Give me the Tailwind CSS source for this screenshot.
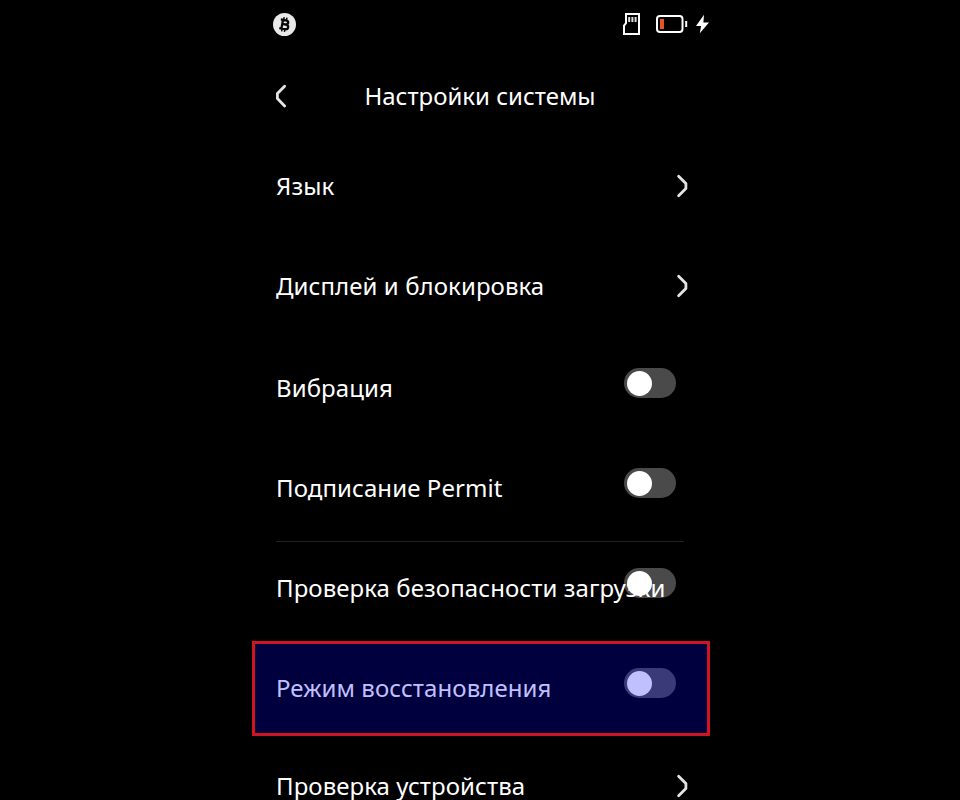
<!DOCTYPE html>
<html lang="ru">
<head>
<meta charset="utf-8">
<title>Настройки системы</title>
<script src="https://cdn.jsdelivr.net/npm/@tailwindcss/browser@4"></script>
</head>
<body class="bg-black text-white font-['Noto_Sans',sans-serif] text-[24px] leading-[34px] tracking-[0.08px]">
<div class="w-[960px] h-[800px] overflow-hidden">
<main class="mx-auto w-[480px]">
  <div class="h-[48px] pl-[33px] pr-[10px] flex items-center">
    <svg class="size-[23px]" viewBox="0 0 23 23"><circle cx="11.5" cy="11.5" r="11.5" fill="#e9e9e9"/><g transform="rotate(10 11.5 11.5)" fill="none" stroke="#080808"><path stroke-width="2.3" d="M7 7.1h5.200c3.500 0 3.500 4.200 0 4.200H9.200M9.200 11.300h3.600c3.700 0 3.700 4.700 0 4.700H7M9.200 7.100V16"/><path stroke-width="1.5" d="M9.900 4.300v2.800M12.700 4.300v2.800M9.900 16v2.800M12.700 16v2.800"/></g></svg>
    <svg class="ml-auto w-[19px] h-[24px]" viewBox="0 0 19 24" fill="none"><path d="M5 2h13v20H3v-8.500l2-2.300z" stroke="#fff" stroke-width="2" transform="translate(-1 0)"/><path d="M7.200 5v5M10.400 5v5M13.600 5v5" stroke="#ddd" stroke-width="2"/></svg>
    <svg class="ml-[14px] w-[33px] h-[20px]" viewBox="0 0 33 20" fill="none"><rect x="2" y="2" width="25.500" height="16" rx="3" stroke="#fff" stroke-width="2"/><path d="M5 5h4v10H5z" fill="#e45524"/><path d="M31.200 7v6" stroke="#fff" stroke-width="2"/></svg>
    <svg class="ml-[7px] w-[15px] h-[20px]" viewBox="0 0 15 20"><path d="M9 .7 1 12h5.100L4.800 19.300 14 8.400H8.400z" fill="#fff"/></svg>
  </div>
  <header class="h-[88px] px-[36px] grid grid-cols-[1fr_auto_1fr] items-center pt-[8px]">
    <svg class="w-[11px] h-[24px] -ml-[1px]" viewBox="0 0 11 24" fill="none" stroke="#e4e4e4" stroke-width="2.800" stroke-linecap="round" stroke-linejoin="round"><path d="M9.600 2.200 2.400 9.500v5l7.200 7.500"/></svg>
    <h1 class="tracking-normal">Настройки системы</h1>
  </header>
  <ul>
    <li class="h-[100px] pl-[36px] pr-[32px] flex items-center justify-between"><span>Язык</span><svg class="w-[12px] h-[24px]" viewBox="0 0 12 24" fill="none" stroke="#e4e4e4" stroke-width="2.800" stroke-linecap="round" stroke-linejoin="round"><path d="M2.600 2.200 9.900 9.500v5l-7.300 7.300"/></svg></li>
    <li class="h-[100px] pl-[36px] pr-[32px] flex items-center justify-between"><span>Дисплей и блокировка</span><svg class="w-[12px] h-[24px]" viewBox="0 0 12 24" fill="none" stroke="#e4e4e4" stroke-width="2.800" stroke-linecap="round" stroke-linejoin="round"><path d="M2.600 2.200 9.900 9.500v5l-7.300 7.300"/></svg></li>
    <li class="h-[100px] pl-[36px] pr-[44px] flex justify-between"><span class="pt-[35px]">Вибрация</span><i class="mt-[32px] w-[52px] h-[30px] rounded-full bg-[#4a4a4a] pl-[3px] flex items-center"><b class="size-[25px] rounded-full bg-white"></b></i></li>
    <li class="h-[100px] pl-[36px] pr-[44px] flex justify-between"><span class="pt-[35px]">Подписание Permit</span><i class="mt-[32px] w-[52px] h-[30px] rounded-full bg-[#4a4a4a] pl-[3px] flex items-center"><b class="size-[25px] rounded-full bg-white"></b></i></li>
    <li class="h-[105px] px-[36px] pt-[5px]"><div class="h-[100px] border-t border-[#202020] pr-[8px] grid grid-cols-[348px_52px]"><span class="pt-[29px] z-10 whitespace-nowrap">Проверка безопасности загрузки</span><i class="mt-[26px] w-[52px] h-[30px] rounded-full bg-[#4a4a4a] pl-[3px] flex items-center"><b class="size-[25px] rounded-full bg-white"></b></i></div></li>
    <li class="h-[95px] px-[12px]"><div class="w-[458px] h-[95px] border-[3px] border-[#d01420] bg-[#00003e] text-[#c0c0ff] pl-[21px] pr-[31px] flex justify-between"><span class="pt-[27px]">Режим восстановления</span><i class="mt-[24px] w-[52px] h-[30px] rounded-full bg-[#3a3a78] pl-[3px] flex items-center"><b class="size-[25px] rounded-full bg-[#c0c0ff]"></b></i></div></li>
    <li class="h-[100px] pl-[36px] pr-[32px] flex items-center justify-between"><span>Проверка устройства</span><svg class="w-[12px] h-[24px]" viewBox="0 0 12 24" fill="none" stroke="#e4e4e4" stroke-width="2.800" stroke-linecap="round" stroke-linejoin="round"><path d="M2.600 2.200 9.900 9.500v5l-7.300 7.300"/></svg></li>
  </ul>
</main>
</div>
</body>
</html>
